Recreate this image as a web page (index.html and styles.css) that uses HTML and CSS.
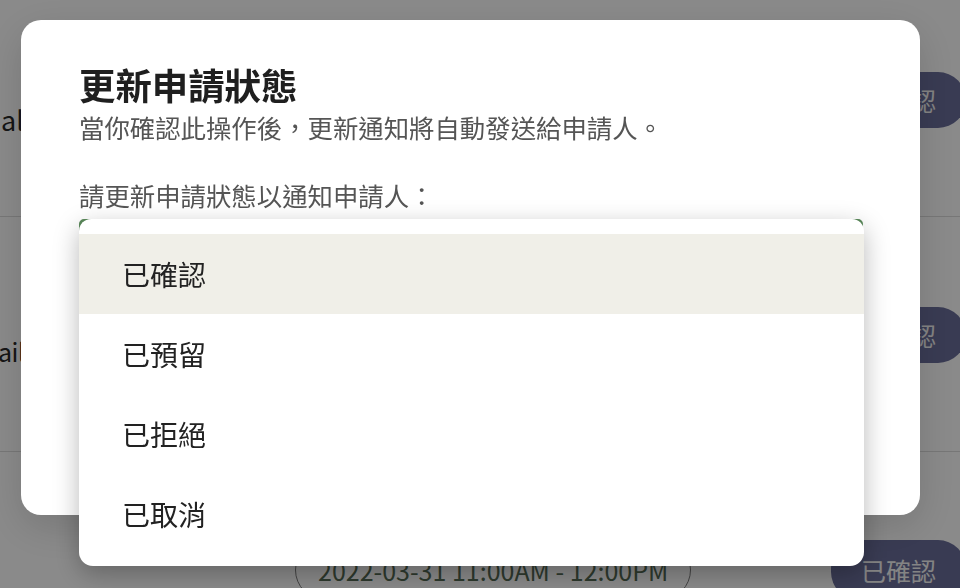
FILE: index.html
```html
<!DOCTYPE html>
<html lang="zh-Hant">
<head>
    <meta charset="UTF-8">
    <meta name="viewport" content="width=device-width, initial-scale=1.0">
    <title>更新申請狀態</title>
    <link rel="stylesheet" href="styles.css">
</head>
<body>
    <div class="page">
        <div class="row">
            <div class="row-label">al</div>
            <div class="status-pill">已確認</div>
        </div>
        <div class="row">
            <div class="row-label row-label-cut">ail</div>
            <div class="status-pill">已確認</div>
        </div>
        <div class="row row-last">
            <div class="time-pill">2022-03-31 11:00AM - 12:00PM</div>
            <div class="status-pill">已確認</div>
        </div>
    </div>

    <div class="backdrop">
        <div class="modal">
            <h2 class="modal-title">更新申請狀態</h2>
            <p class="modal-desc">當你確認此操作後，更新通知將自動發送給申請人。</p>
            <p class="modal-label">請更新申請狀態以通知申請人：</p>
            <div class="select-wrap">
                <div class="select-box"></div>
                <ul class="menu">
                    <li class="menu-item selected">已確認</li>
                    <li class="menu-item">已預留</li>
                    <li class="menu-item">已拒絕</li>
                    <li class="menu-item">已取消</li>
                </ul>
            </div>
        </div>
    </div>
</body>
</html>
```

FILE: styles.css
```css
html, body { margin: 0; padding: 0; }
body { font-family: "Noto Sans CJK TC", "Noto Sans", sans-serif; background: #fff; color: #282828; width: 960px; height: 588px; overflow: hidden; }

/* page behind the dialog */
.page { margin-top: -18px; height: 606px; overflow: hidden; }
.row { height: 234px; border-bottom: 1px solid #dcdcdc; display: flex; align-items: flex-start; }
.row-label { font-size: 27px; line-height: 40px; margin-top: 118px; padding-left: 1px; color: #282828; }
.row-label-cut { font-size: 25px; letter-spacing: -0.5px; margin-left: -3px; margin-top: 114px; }
.status-pill { margin-left: auto; margin-top: 90px; margin-right: -6px; height: 56px; line-height: 56px; padding: 0 30px; border-radius: 28px; background: #6a6e9a; color: #f4f4f4; font-size: 25px; }
.row-last { border-bottom: none; }
.row-last .status-pill { margin-top: 88px; height: 60px; line-height: 60px; }
.time-pill { margin-top: 88px; margin-left: 295px; height: 60px; line-height: 58px; box-sizing: border-box; padding: 0 22px; border: 1px solid #7d7d7d; border-radius: 30px; color: #556b55; font-size: 25px; }

/* dialog */
.backdrop { position: fixed; inset: 0; background: rgba(0, 0, 0, 0.46); padding: 20px 0 0 21px; }
.modal { width: 899px; height: 495px; box-sizing: border-box; padding: 43px 57px 0 58px; background: #fff; border-radius: 20px; box-shadow: 0 12px 40px rgba(0, 0, 0, 0.15); }
.modal-title { margin: 0; font-size: 36.4px; line-height: 43px; font-weight: 700; color: #1f1f1f; }
.modal-desc { margin: 4px 0 0; font-size: 25.4px; line-height: 35px; color: #555; }
.modal-label { margin: 33px 0 0; font-size: 25.4px; line-height: 35px; color: #555; }

.select-wrap { position: relative; margin-top: 6px; }
.select-box { height: 56px; border: 3px solid #5b8a5b; border-radius: 5px; }
.menu { position: absolute; top: 0; left: 0; right: -1px; margin: 0; padding: 15px 0 12px; list-style: none; background: #fff; border-radius: 12px 12px 14px 14px; box-shadow: 0 8px 26px rgba(0, 0, 0, 0.28); }
.menu-item { height: 80px; line-height: 80px; padding-left: 43px; font-size: 28px; color: #222; }
.menu-item.selected { background: #f0efe8; }
```
